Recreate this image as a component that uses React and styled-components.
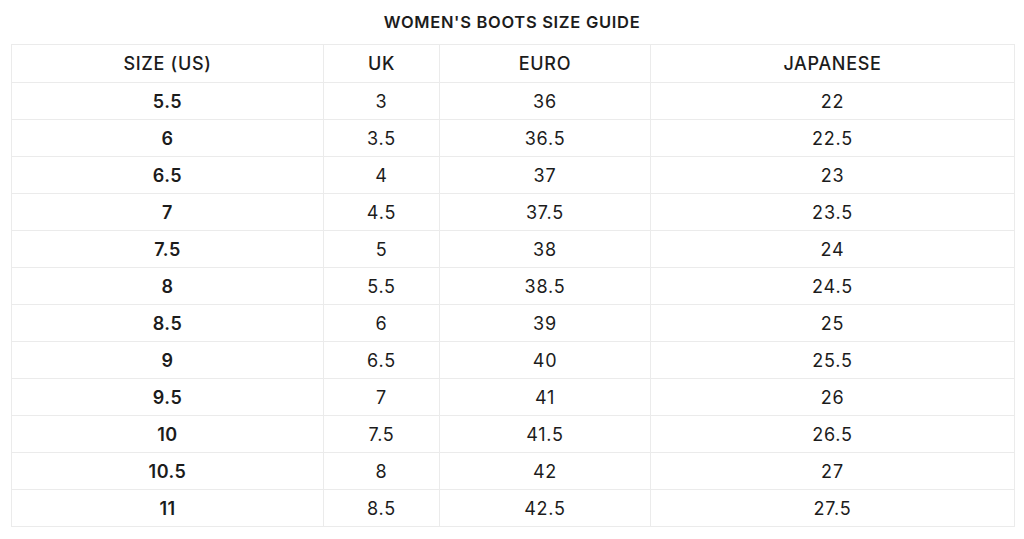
import React from 'react';
import styled, { createGlobalStyle } from 'styled-components';

const GlobalStyle = createGlobalStyle`
  html, body {
    margin: 0;
    padding: 0;
    background: #fff;
  }
  body {
    font-family: Inter, Lato, "Liberation Sans", sans-serif;
    color: #1c1c1c;
  }
`;

const Page = styled.div`
  width: 1024px;
  height: 539px;
  box-sizing: border-box;
  padding: 0 11px;
`;

const Title = styled.h1`
  margin: 0;
  height: 44px;
  display: flex;
  align-items: center;
  justify-content: center;
  font-size: 16.5px;
  font-weight: 600;
  letter-spacing: 0.7px;
  padding-bottom: 1px;
  box-sizing: border-box;
`;

const Table = styled.table`
  width: 1003px;
  border-collapse: collapse;
  table-layout: fixed;
  font-size: 18px;
`;

const Cell = styled.td`
  border: 1px solid #ebebeb;
  height: 36px;
  padding: 0;
  text-align: center;
  vertical-align: middle;
  font-weight: ${(p) => (p.$strong ? 600 : 400)};
  letter-spacing: ${(p) => (p.$strong ? '0.5px' : '0.8px')};
`;

const Head = styled(Cell).attrs({ as: 'th' })`
  height: 37px;
  font-weight: 500;
  letter-spacing: 0.7px;
`;

const columns = [
  { label: 'SIZE (US)', width: 312 },
  { label: 'UK', width: 116 },
  { label: 'EURO', width: 211 },
  { label: 'JAPANESE', width: 364 },
];

const rows = [
  ['5.5', '3', '36', '22'],
  ['6', '3.5', '36.5', '22.5'],
  ['6.5', '4', '37', '23'],
  ['7', '4.5', '37.5', '23.5'],
  ['7.5', '5', '38', '24'],
  ['8', '5.5', '38.5', '24.5'],
  ['8.5', '6', '39', '25'],
  ['9', '6.5', '40', '25.5'],
  ['9.5', '7', '41', '26'],
  ['10', '7.5', '41.5', '26.5'],
  ['10.5', '8', '42', '27'],
  ['11', '8.5', '42.5', '27.5'],
];

export default function App() {
  return (
    <Page>
      <GlobalStyle />
      <Title>WOMEN'S BOOTS SIZE GUIDE</Title>
      <Table>
        <colgroup>
          {columns.map((c) => (
            <col key={c.label} style={{ width: c.width }} />
          ))}
        </colgroup>
        <thead>
          <tr>
            {columns.map((c) => (
              <Head key={c.label}>{c.label}</Head>
            ))}
          </tr>
        </thead>
        <tbody>
          {rows.map((r) => (
            <tr key={r[0]}>
              {r.map((v, i) => (
                <Cell key={i} $strong={i === 0}>
                  {v}
                </Cell>
              ))}
            </tr>
          ))}
        </tbody>
      </Table>
    </Page>
  );
}
